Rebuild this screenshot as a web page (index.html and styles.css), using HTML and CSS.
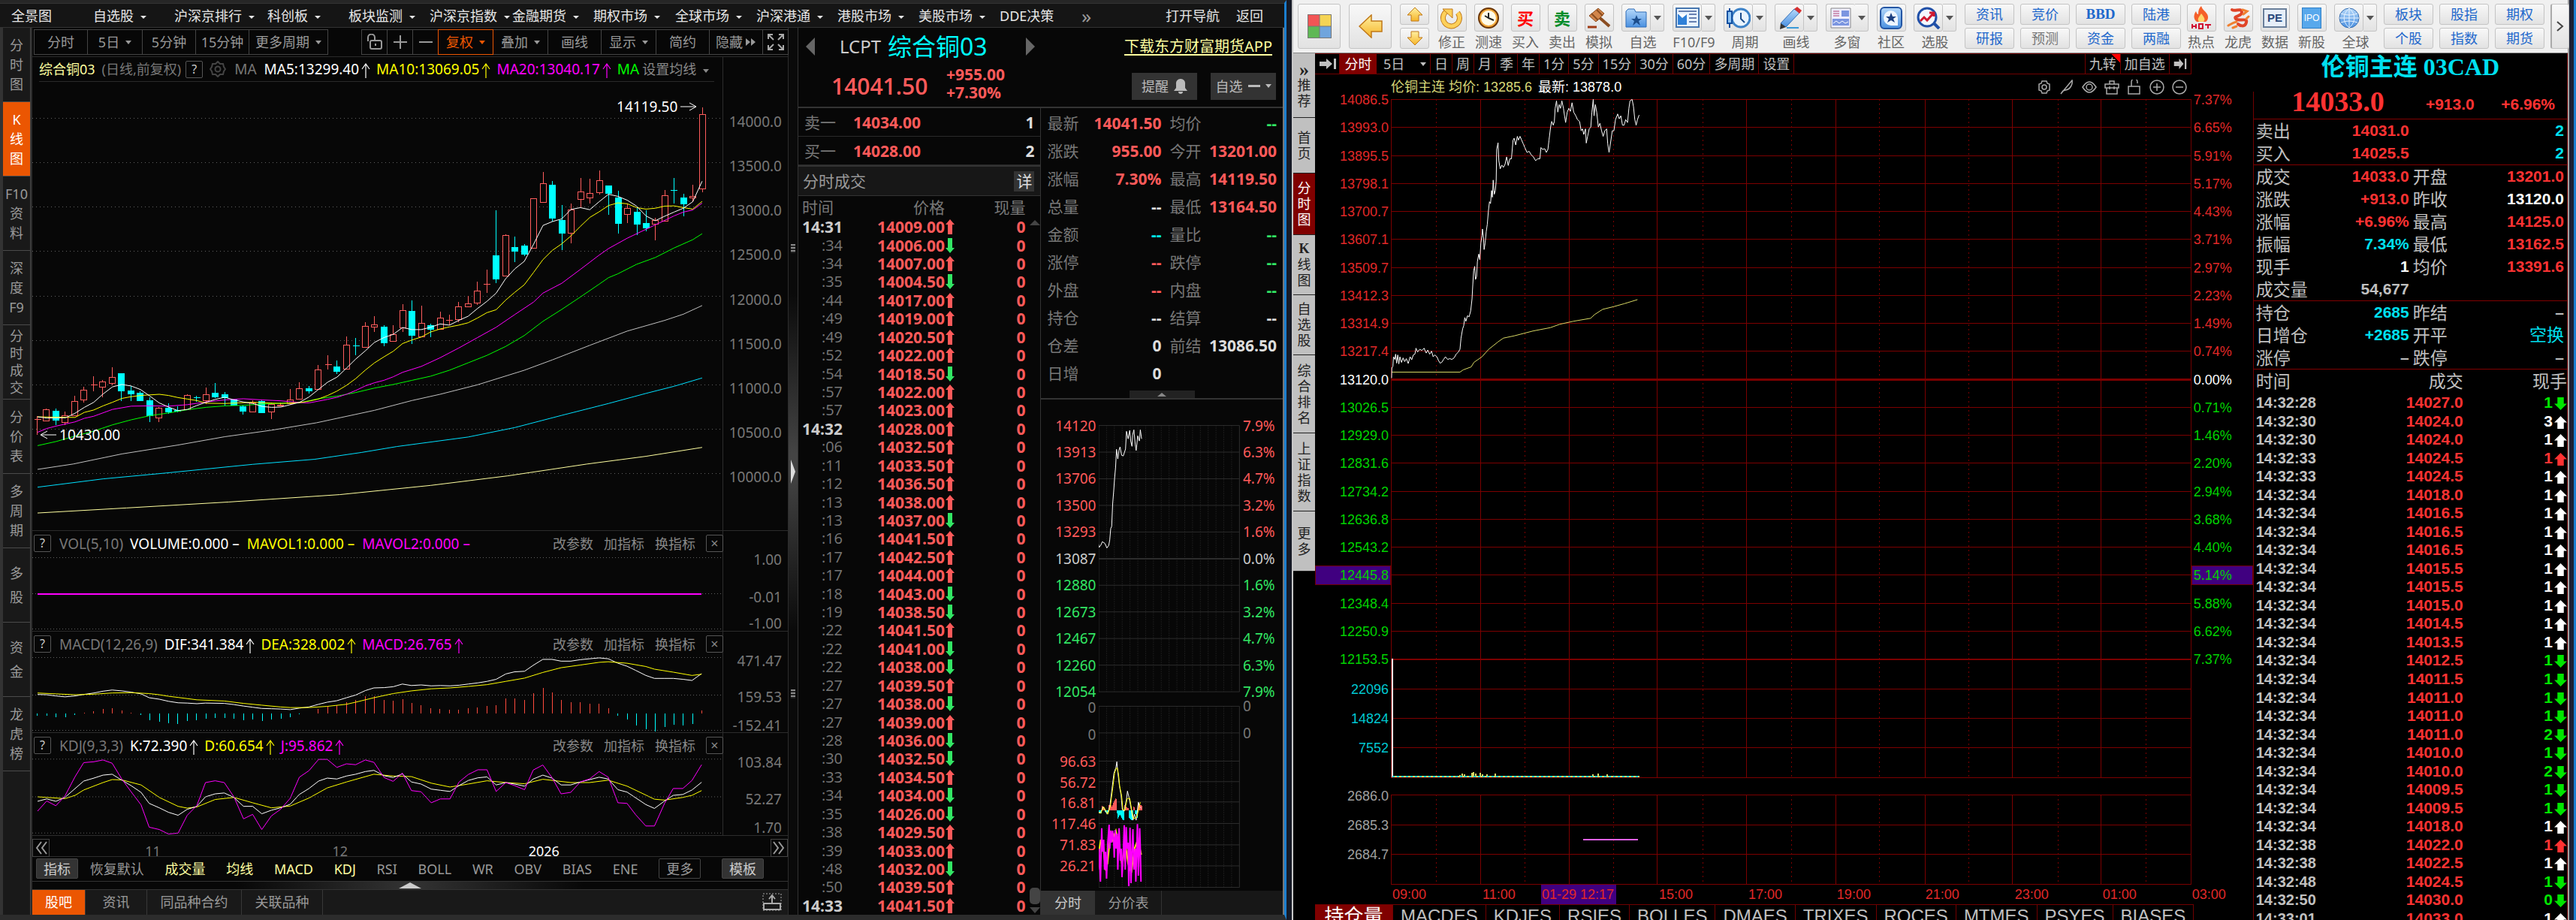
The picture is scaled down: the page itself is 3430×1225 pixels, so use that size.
FILE: index.html
```html
<!DOCTYPE html>
<html lang="zh-CN">
<head>
<meta charset="utf-8">
<title>综合铜03 · 伦铜主连</title>
<link rel="stylesheet" href="styles.css">
</head>
<body>
<svg class="defs" aria-hidden="true">
  <defs>
    <linearGradient id="gold" x1="0" y1="0" x2="0" y2="1"><stop offset="0" stop-color="#fff0a0"/><stop offset="1" stop-color="#f5b429"/></linearGradient>
    <linearGradient id="blue" x1="0" y1="0" x2="0" y2="1"><stop offset="0" stop-color="#b5d8fa"/><stop offset="1" stop-color="#4a90e0"/></linearGradient>
    <symbol id="up" viewBox="0 0 12 20"><path d="M6 0 0 7h3v13h6V7h3z"/></symbol>
    <symbol id="down" viewBox="0 0 12 20"><path d="M6 20 0 13h3V0h6v13h3z"/></symbol>
    <symbol id="fat-up" viewBox="0 0 16 16"><path d="M8 0 0 8h4v8h8V8h4z"/></symbol>
    <symbol id="fat-down" viewBox="0 0 16 16"><path d="M8 16 0 8h4V0h8v8h4z"/></symbol>
    <symbol id="thin-up" viewBox="0 0 12 20"><path d="M6 20V1M1 8l5-7 5 7" fill="none" stroke="currentColor" stroke-width="1.2"/></symbol>
    <symbol id="skip" viewBox="0 0 24 16"><path d="M1 5h9V1l8 7-8 7v-4H1zM20 1h3v14h-3z"/></symbol>
  </defs>
</svg>
<div class="desk">

<main class="em">
  <nav class="em-menu" id="emMenu"></nav>
  <div class="em-body">
    <nav class="em-side" id="emSide"></nav>
    <section class="chart">
      <div class="tools">
        <button class="w71">分时</button><button class="w73">5日<i class="caret"></i></button><button class="w71">5分钟</button><button class="w71">15分钟</button><button class="w106">更多周期<i class="caret"></i></button>
        <span class="grow"></span>
        <button class="w34" aria-label="解锁"><svg width="22" height="22" viewBox="0 0 22 22" fill="none" stroke="#999" stroke-width="2"><rect x="5" y="9" width="15" height="11" rx="2"/><path d="M2 10V5a4 4 0 0 1 9 0v4M12 13v3"/></svg></button><button class="w34" aria-label="放大"><svg width="18" height="18" stroke="#999" stroke-width="2"><path d="M0 9h18M9 0v18"/></svg></button><button class="w34" aria-label="缩小"><svg width="18" height="18" stroke="#999" stroke-width="2"><path d="M0 9h18"/></svg></button><button class="w73 hot">复权<i class="caret"></i></button><button class="w73">叠加<i class="caret"></i></button><button class="w71">画线</button><button class="w73">显示<i class="caret"></i></button><button class="w71">简约</button><button class="w71">隐藏<svg width="14" height="10" fill="#999"><path d="M0 0l6 5-6 5zM7 0l6 5-6 5z"/></svg></button><button class="w34" aria-label="全屏"><svg width="22" height="22" viewBox="0 0 22 22" stroke="#aaa" stroke-width="2" fill="none"><path d="M1 7V1h6M1 1l7 7M15 1h6v6M21 1l-7 7M1 15v6h6M1 21l7-7M15 21h6v-6M21 21l-7-7"/></svg></button>
      </div>
      <div class="panel kline">
        <header class="info">
          <span class="name">综合铜03</span><span class="dim period">(日线,前复权)</span><button class="q">?</button>
          <svg width="22" height="22" viewBox="0 0 22 22" fill="none" stroke="#444" stroke-width="2"><path d="M11 1l3 3 4 0 1 4 2 3-2 3-1 4h-4l-3 3-3-3H4l-1-4-2-3 2-3 1-4h4z"/><circle cx="11" cy="11" r="3.500"/></svg>
          <span class="dim ma">MA</span><span class="w">MA5:13299.40<svg class="ar"><use href="#thin-up"/></svg></span><span class="y">MA10:13069.05<svg class="ar"><use href="#thin-up"/></svg></span><span class="m">MA20:13040.17<svg class="ar"><use href="#thin-up"/></svg></span><span class="lime">MA</span><button class="plain set">设置均线<i class="caret"></i></button>
        </header>
        <svg class="plot" id="kline" viewBox="43 77 920 630" preserveAspectRatio="none"></svg>
        <ul class="axis" id="axK"></ul>
        <span class="mark high">14119.50 <svg width="22" height="12"><path d="M0 6h20M12 1l9 5-9 5" fill="none" stroke="#fff"/></svg></span>
        <span class="mark low"><svg width="22" height="12"><path d="M2 6h20M10 1L1 6l9 5" fill="none" stroke="#fff"/></svg> 10430.00</span>
      </div>
      <div class="panel vol">
        <header class="sub"><button class="q">?</button><span class="dim">VOL(5,10)</span><span class="w">VOLUME:0.000 –</span><span class="y">MAVOL1:0.000 –</span><span class="m">MAVOL2:0.000 –</span></header>
        <svg class="plot" id="vol" viewBox="43 707 920 134" preserveAspectRatio="none"></svg>
        <ul class="axis" id="axV"></ul>
      </div>
      <div class="panel macd">
        <header class="sub"><button class="q">?</button><span class="dim">MACD(12,26,9)</span><span class="w">DIF:341.384<svg class="ar"><use href="#thin-up"/></svg></span><span class="y">DEA:328.002<svg class="ar"><use href="#thin-up"/></svg></span><span class="m">MACD:26.765<svg class="ar"><use href="#thin-up"/></svg></span></header>
        <svg class="plot" id="macd" viewBox="43 841 920 135" preserveAspectRatio="none"></svg>
        <ul class="axis" id="axM"></ul>
      </div>
      <div class="panel kdj">
        <header class="sub"><button class="q">?</button><span class="dim">KDJ(9,3,3)</span><span class="w">K:72.390<svg class="ar"><use href="#thin-up"/></svg></span><span class="y">D:60.654<svg class="ar"><use href="#thin-up"/></svg></span><span class="m">J:95.862<svg class="ar"><use href="#thin-up"/></svg></span></header>
        <svg class="plot" id="kdj" viewBox="43 976 920 137" preserveAspectRatio="none"></svg>
        <ul class="axis" id="axJ"></ul>
      </div>
      <div class="time">
        <button aria-label="向左"><svg width="16" height="18" fill="none" stroke="#999" stroke-width="2"><path d="M8 1L2 9l6 8M15 1L9 9l6 8"/></svg></button>
        <span>11</span><span>12</span><span class="w">2026</span>
        <button aria-label="向右"><svg width="16" height="18" fill="none" stroke="#999" stroke-width="2"><path d="M1 1l6 8-6 8M8 1l6 8-6 8"/></svg></button>
      </div>
      <div class="inds">
        <button class="box fill">指标</button><button class="wide">恢复默认</button><button class="on">成交量</button><button class="on">均线</button><button class="on">MACD</button><button class="on">KDJ</button><button>RSI</button><button>BOLL</button><button>WR</button><button>OBV</button><button>BIAS</button><button>ENE</button><button class="box">更多</button><button class="box fill">模板</button>
      </div>
      <div class="fold"><svg width="30" height="8" fill="#ccc"><path d="M15 0l15 8H0z"/></svg></div>
      <div class="btabs">
        <button class="act">股吧</button><button class="t2">资讯</button><button class="t3">同品种合约</button><button class="t4">关联品种</button><span class="grow"></span>
        <svg width="26" height="24" viewBox="0 0 26 24" fill="none" stroke="#aaa"><path d="M1 1h24v22H1z" stroke-dasharray="2 2"/><path d="M2 14h22v8H2z" stroke-width="2"/><path d="M13 15V4M9 8l4-5 4 5" stroke-width="2"/></svg>
      </div>
    </section>
    <div class="split"><i class="grip"></i><svg width="8" height="32" fill="#ddd"><path d="M1 0q6 16 6 16t-6 16z"/></svg><i class="grip"></i></div>
    <section class="quote">
      <header class="qhead">
        <button class="plain tri-l" aria-label="上一个"><svg width="12" height="24" fill="#666"><path d="M12 0v24L0 12z"/></svg></button>
        <span class="code">LCPT</span><h1>综合铜03</h1>
        <button class="plain tri-r" aria-label="下一个"><svg width="12" height="24" fill="#666"><path d="M0 0v24l12-12z"/></svg></button>
        <a href="#app">下载东方财富期货APP</a>
        <strong class="last">14041.50</strong><p class="chg">+955.00<br>+7.30%</p>
        <div class="acts"><button>提醒<svg width="18" height="20" fill="#bbb"><path d="M9 0a6 6 0 0 1 6 7v5l3 4H0l3-4V7a6 6 0 0 1 6-7zM6 17h6a3 3 0 0 1-6 0z"/></svg></button><button>自选<i class="dash"></i><i class="caret"></i></button></div>
      </header>
      <div class="qleft">
        <dl class="bid"><dt>卖一</dt><dd>14034.00</dd><dd class="n">1</dd></dl>
        <dl class="bid"><dt>买一</dt><dd>14028.00</dd><dd class="n">2</dd></dl>
        <div class="tickhead">分时成交<button>详</button></div>
        <div class="tickwrap">
          <table class="ticks"><thead><tr><th>时间</th><th>价格</th><th>现量</th></tr></thead><tbody id="ticks"></tbody></table>
          <div class="sb"><svg width="14" height="7"><path d="M7 0l7 7H0z"/></svg><i></i><svg width="14" height="8"><path d="M0 0h14l-7 8z"/></svg></div>
        </div>
      </div>
      <div class="qright">
        <dl class="stats" id="stats"></dl>
        <div class="pull"><button aria-label="收起"><svg width="12" height="5" fill="#888"><path d="M6 0l6 5H0z"/></svg></button></div>
        <div class="mini"><ul class="axis" id="axL"></ul><svg id="mini" viewBox="1464 533 187 653" preserveAspectRatio="none"></svg><ul class="axis" id="axR"></ul></div>
        <div class="mtabs"><button class="act">分时</button><button>分价表</button></div>
      </div>
    </section>
  </div>
</main>

<main class="cl">
  <div class="bar">
    <button class="big" aria-label="主页"><svg width="32" height="32"><path fill="#f25555" d="M0 0h16v16H0z"/><path fill="#f5d455" d="M16 0h16v16H16z"/><path fill="#5fb855" d="M0 16h16v16H0z"/><path fill="#70a5dd" d="M16 16h16v16H16z"/><path fill="none" stroke="#777" d="M.5.5h31v31H.5zM16 0v32M0 16h32"/></svg></button>
    <button class="big" aria-label="后退"><svg width="32" height="32" fill="url(#gold)" stroke="#c07818" stroke-width="1.500"><path d="M1 16L17 1v8h14v14H17v8z"/></svg></button>
    <div class="ud"><button aria-label="上翻"><svg width="22" height="20" fill="url(#gold)" stroke="#c07818"><path d="M11 1l10 10h-5v8H6v-8H1z"/></svg></button><button aria-label="下翻"><svg width="22" height="20" fill="url(#gold)" stroke="#c07818"><path d="M11 19L1 9h5V1h10v8h5z"/></svg></button></div>
    <button class="ic"><b><svg width="32" height="30"><path d="M9 6a11 11 0 1 0 15 2" fill="none" stroke="#c07818" stroke-width="7"/><path d="M9 6a11 11 0 1 0 15 2" fill="none" stroke="#fcd05a" stroke-width="5"/><path d="M4 3h13v12z" fill="#fcd05a" stroke="#c07818"/></svg></b>修正</button>
    <button class="ic"><b><svg width="30" height="30"><circle cx="15" cy="15" r="13" fill="#f2a93b" stroke="#6b3505" stroke-width="2"/><circle cx="15" cy="15" r="10" fill="#fffbe8"/><path d="M15 8v7l7 3M10 12l5 3" fill="none" stroke="#222" stroke-width="2"/></svg></b>测速</button>
    <button class="ic"><b class="buy">买</b>买入</button>
    <button class="ic"><b class="sell">卖</b>卖出</button>
    <button class="ic"><b><svg width="32" height="30"><path d="M14 12l16 14" stroke="#8a4c20" stroke-width="4"/><path d="M3 12L15 2l8 7-11 11z" fill="#d2854a" stroke="#8a4c20"/><path d="M6 9l9 9M13 4l8 8" stroke="#8a4c20" stroke-width="2"/><path d="M1 27h12" stroke="#a03a14" stroke-width="3"/></svg></b>模拟</button>
    <button class="ic dd"><b><svg width="30" height="28"><path d="M1 26V5l3-3h8l2 4h14v20z" fill="url(#blue)" stroke="#2f6db8"/><path d="M15 10l2 5h5l-4 3 2 6-5-4-5 4 2-6-4-3h5z" fill="#1c4d8c"/></svg></b><em></em>自选</button>
    <button class="ic dd"><b><svg width="32" height="28"><path d="M1 1h30v25H1z" fill="#e8f2ff" stroke="#4877b0" stroke-width="2"/><path d="M3 9h12v14H3z" fill="#2f80d8"/><path d="M4 9l5 5 6-5" fill="#fff"/><path d="M4 5h24M18 9h10M18 14h10M18 19h10" stroke="#667fb0" stroke-width="2"/></svg></b><em></em>F10/F9</button>
    <button class="ic dd"><b><svg width="32" height="30"><circle cx="19" cy="15" r="12" fill="#e9f4ff" stroke="#3c82c8" stroke-width="3"/><path d="M19 8v8l5 5" fill="none" stroke="#1c4d8c" stroke-width="2"/><path d="M4 2v26" stroke="#1450a0" stroke-width="2"/><path d="M1 6h6v16H1z" fill="#8fc4f5" stroke="#1450a0" stroke-width="2"/></svg></b><em></em>周期</button>
    <button class="ic dd"><b><svg width="32" height="30"><path d="M4 22L22 3l7 5-18 19z" fill="url(#blue)" stroke="#2f6db8"/><path d="M22 3l4-3 6 5-3 4z" fill="#d63030"/><path d="M4 22l7 5-8 3z" fill="#333"/><path d="M12 28h16" stroke="#3a9ad8" stroke-width="2"/></svg></b><em></em>画线</button>
    <button class="ic dd one"><b><svg width="28" height="28"><path d="M1 1h26v26H1z" fill="#eef" stroke="#888"/><path d="M15 4h10v8H15zM3 15h22v9H3z" fill="#7b95e0"/><path d="M4 5h8M4 8h8M4 11h8" stroke="#b04070"/><path d="M4 21l4-3 4 3 4-3 4 3 4-2" fill="none" stroke="#fff"/></svg></b><em></em>多窗</button>
    <button class="ic"><b><svg width="30" height="30"><rect x="1" y="1" width="28" height="28" rx="5" fill="url(#blue)" stroke="#2456a4" stroke-width="2"/><path d="M15 5a10 10 0 1 0 0 20h9V15a10 10 0 0 0-9-10z" fill="#eef6ff"/><path d="M15 8l2 5h5l-4 3 2 5-5-3-5 3 2-5-4-3h5z" fill="#1c3f80"/></svg></b>社区</button>
    <button class="ic dd"><b><svg width="32" height="30"><path d="M23 22l7 7" stroke="#2050a8" stroke-width="4"/><circle cx="14" cy="14" r="12" fill="#f4f8ff" stroke="#2050a8" stroke-width="3"/><path d="M5 19l5-5 4 4 8-9M17 8h6v5" fill="none" stroke="#d01830" stroke-width="3"/></svg></b><em></em>选股</button>
    <div class="txt c4"><button>资讯</button><button>竞价</button><button class="serif">BBD</button><button>陆港</button><button>研报</button><button class="off">预测</button><button>资金</button><button>两融</button></div>
    <button class="ic"><b><svg width="30" height="32"><path d="M15 0c2 6 6 7 8 11s1 8-2 10H9C4 17 5 11 8 7c1 3 2 4 3 4 0-5 1-8 4-11z" fill="#f5602a"/><path d="M15 10c4 5 6 8 3 11h-6c-3-4 0-6 3-11z" fill="#ffd66b"/><path d="M3 24v6M8 24v6M3 27h5M12 24h5v6h-5zM20 25h8M24 24v6" fill="none" stroke="#d01030" stroke-width="2"/></svg></b>热点</button>
    <button class="ic"><b><svg width="32" height="30" fill="none" stroke-linecap="round"><path d="M8 4c4 3 12-3 13 3s-12 5-8 9 16-2 14 5-9 4-11 2" stroke="#e04428" stroke-width="4"/><path d="M14 20c-5 1-9 4-11 5M22 4l6 2-5 4M27 16l3-3M9 28l5-2" stroke="#f08030" stroke-width="3"/></svg></b>龙虎</button>
    <button class="ic"><b class="pe"><i>PE</i></b>数据</button>
    <button class="ic"><b class="ipo"><i>IPO</i></b>新股</button>
    <button class="ic dd"><b><svg width="30" height="30"><circle cx="15" cy="15" r="13" fill="url(#blue)" stroke="#3a6fb0"/><path d="M15 2v26M2 15h26M15 2c-9 8-9 18 0 26M15 2c9 8 9 18 0 26M4 9q11 4 22 0M4 21q11-4 22 0" fill="none" stroke="#e8f3ff"/></svg></b><em></em>全球</button>
    <div class="txt c3"><button>板块</button><button>股指</button><button>期权</button><button>个股</button><button>指数</button><button>期货</button></div>
    <button class="next" aria-label="更多"><svg width="12" height="16" fill="none" stroke="#444" stroke-width="2"><path d="M2 2l7 6-7 6"/></svg></button>
  </div>
  <div class="cl-body">
    <nav class="cl-side">
      <button class="r86"><b>»</b>推荐</button><button class="r74">首页</button><button class="r82 act">分时图</button><button class="r80"><b>K</b>线图</button><button class="r80">自选股</button><button class="r104">综合排名</button><button class="r104">上证指数</button><button class="r80">更多</button>
    </nav>
    <section class="intra">
      <div class="per">
        <button class="first" aria-label="收起左栏"><svg width="24" height="16"><use href="#skip"/></svg></button><button class="act">分时</button><button class="d5">5日<i class="caret"></i></button><button>日</button><button>周</button><button>月</button><button>季</button><button>年</button><button>1分</button><button>5分</button><button>15分</button><button>30分</button><button>60分</button><button>多周期</button><button class="end">设置</button>
        <span class="grow"></span><button class="nine">九转</button><button>加自选</button><button aria-label="收起右栏"><svg width="18" height="16" viewBox="0 0 24 16" preserveAspectRatio="none"><use href="#skip"/></svg></button>
      </div>
      <div class="cinfo"><span class="ye">伦铜主连 均价: 13285.6</span><span class="w">最新: 13878.0</span><span class="grow"></span>
        <svg viewBox="0 0 20 20"><path d="M7 2h6l1 3 3 1v8l-3 1-1 3H7l-1-3-3-1V6l3-1z"/><circle cx="10" cy="10" r="3"/></svg>
        <svg viewBox="0 0 20 20"><path d="M2 19L17 1c1 5-2 12-9 13l-3 1z"/></svg>
        <svg viewBox="0 0 20 20"><path d="M1 10q9-14 18 0-9 14-18 0z"/><circle cx="10" cy="10" r="4"/></svg>
        <svg viewBox="0 0 20 20"><path d="M1 6h18v5H1zM3 11v8h14v-8M7 6V2h6v4M7 9v4M13 9v4"/></svg>
        <svg viewBox="0 0 20 20"><path d="M2 9h15v10H2zM6 9V3a4 4 0 0 1 8 0v2"/></svg>
        <svg viewBox="0 0 20 20"><circle cx="10" cy="10" r="9"/><path d="M5 10h10M10 5v10"/></svg>
        <svg viewBox="0 0 20 20"><circle cx="10" cy="10" r="9"/><path d="M5 10h10"/></svg>
      </div>
      <ul class="axis" id="axCL"></ul><svg class="cplot" id="intra" viewBox="1853 132 1065 1046" preserveAspectRatio="none"></svg><ul class="axis" id="axCR"></ul>
      <ol class="hours"><li>09:00</li><li>11:00</li><li class="cur">01-29 12:17</li><li>15:00</li><li>17:00</li><li>19:00</li><li>21:00</li><li>23:00</li><li>01:00</li><li>03:00</li></ol>
      <div class="itabs"><button class="act">持仓量</button><button>MACDES</button><button>KDJES</button><button>RSIES</button><button>BOLLES</button><button>DMAES</button><button>TRIXES</button><button>ROCES</button><button>MTMES</button><button>PSYES</button><button>BIASES</button></div>
    </section>
    <section class="cq">
      <h2>伦铜主连 <span>03CAD</span></h2>
      <div class="cprice"><strong>14033.0</strong><b>+913.0</b><b>+6.96%</b></div>
      <div id="cstats"></div>
      <table class="cticks"><thead><tr><th>时间</th><th>成交</th><th>现手</th></tr></thead><tbody id="cticks"></tbody></table>
    </section>
  </div>
</main>
<div class="edge"></div>
</div>
<script src="app.js"></script>
</body>
</html>
```
FILE: styles.css
```css
*{box-sizing:border-box}
body{margin:0;background:#161a26;color:#999;font:18px/24px "Noto Sans","Noto Sans CJK SC",sans-serif}
button{margin:0;padding:0;border:0;background:none;color:inherit;font:inherit;white-space:nowrap;cursor:pointer}
ul,ol,dl,dd,p,h1,h2{margin:0;padding:0;list-style:none}
svg{flex:none;display:block}
.defs{position:absolute;width:0;height:0}
.grow{flex:1}
.caret{display:inline-block;border:4px solid transparent;border-top:5px solid currentColor;border-bottom:0;margin-left:9px;vertical-align:middle}
.w{color:#fff}.y{color:#ff0}.m{color:#f0f}.lime{color:#0f0}.dim{color:#777}
.desk{display:grid;grid-template:minmax(0,1fr)/minmax(0,1713fr) 7px minmax(0,1701fr) 9px;height:100vh;min-height:900px;overflow:hidden}
.cl{grid-column:3}
.edge{border-right:3px solid #1b7fd0;background:#1a2033}

/* 左侧行情窗口 */
.em{display:grid;grid-template-rows:33px minmax(0,1fr);min-width:0;border-top:4px solid #262626;border-bottom:7px solid #2c2c2c;background:#070707;border-right:3px solid #1b7fd0}
.em-menu{display:flex;align-items:center;padding-left:15px;background:#151515;border-top:1px solid #333;border-bottom:1px solid #333;color:#e6e6e6}
.em-menu button{flex:0 0 108px;text-align:left}
.em-menu .s{flex-basis:109px}.em-menu .l{flex-basis:124px}.em-menu .x{flex-basis:110px}
.em-menu .caret{border-top-width:4px}
.em-menu .more{color:#999;flex-basis:30px;font-size:26px}
.em-menu .nav{flex:0 0 94px}.em-menu .back{flex:0 0 64px}
.em-body{display:grid;grid-template:minmax(0,1fr)/41px minmax(0,1009fr) 12px minmax(0,646fr);min-height:0;border-right:2px solid #777}
.em-side{border-left:4px solid #333;background:#191919;display:flex;flex-direction:column;border-right:1px solid #444}
.em-side button{flex:0 0 99px;border-bottom:1px solid #4a4a4a;display:flex;flex-direction:column;justify-content:center;align-items:center;line-height:26px}
.em-side .n4{line-height:23px}.em-side .n2{line-height:32px}
.em-side .act{background:#eb5602;color:#fff}
.chart{display:grid;grid-template-rows:39px minmax(0,630fr) minmax(0,134fr) minmax(0,135fr) minmax(0,137fr) 28px 33px 10px 34px;border-left:2px solid #2c2c2c;min-width:0;border-right:1px solid #2c2c2c}
.tools{display:flex;padding:2px 0 2px 2px;border-bottom:1px solid #2a2a2a}
.tools button{border:1px solid #444;display:flex;align-items:center;justify-content:center;gap:4px;height:34px;margin-right:-1px}
.tools .caret{margin-left:4px}
.w71{width:72px}.w73{width:74px}.w106{width:106px}.w34{width:35px}
.tools .hot{border-color:#eb5602;color:#eb5602;z-index:1}
.panel{display:grid;grid-template:minmax(0,1fr)/minmax(0,920fr) 86px;border-bottom:1px solid #2c2c2c;min-height:0;position:relative}
.panel>*{grid-row:1}
.panel .plot{grid-column:1;width:100%;height:100%;border-right:1px solid #2c2c2c;min-height:0}
.panel .axis{grid-column:2;padding-right:8px}
.axis{display:grid;text-align:right;line-height:20px;font-size:19px;color:#777;min-height:0}
.axis::before{content:""}
.axis li{white-space:nowrap}
.info,.sub{grid-column:1;align-self:start;display:flex;align-items:center;height:33px;font-size:19px;white-space:nowrap;position:relative;z-index:1}
.info{margin:0 12px 0 9px;border-bottom:1px solid #2a2a2a}
.name{color:#ffffa0;font-size:18px}.period{font-size:18px;margin-left:9px}
.q{border:1px solid #555;border-radius:2px;width:23px;height:23px;line-height:21px;color:#ccc;font-size:16px;margin:0 9px 0 6px}
.ma{margin:0 10px 0 11px}
.info .ar,.sub .ar{display:inline-block;width:12px;height:20px;vertical-align:middle;margin:0 8px 0 3px}
.set{font-size:18px;color:#888;margin-left:4px}
.sub{height:34px;padding-left:2px;font-size:19px}
.sub .q{margin:0 11px 0 0}.sub .dim{margin-right:9px;font-size:19px}
.vol .sub span.w,.vol .sub span.y{margin-right:10px}
.sub .ops{margin-left:auto;display:flex;gap:14px;align-items:center;color:#888;font-size:18px}
.sub .ops .q{margin:0;color:#888;font-size:18px}
.mark{position:absolute;color:#fff;font-size:19px;display:flex;align-items:center;gap:4px}
.mark.high{right:12%;top:8.5%}.mark.low{left:1%;top:78%}
.time{display:grid;grid-template-columns:150fr 249fr 261fr 322fr 23px;align-items:center;border-bottom:1px solid #2c2c2c;font-size:18px;color:#777}
.time>*{grid-row:1}
.time span{padding-top:8px}
.time button{width:23px;height:24px;border:1px solid #444;display:grid;place-items:center}
.time button:first-child{grid-column:1}.time span:nth-of-type(1){grid-column:2}.time span:nth-of-type(2){grid-column:3}.time span:nth-of-type(3){grid-column:4}
.inds{display:flex;align-items:center;justify-content:space-between;padding:0 32px 0 5px;border-bottom:1px solid #333}
.inds .on{color:#ffffa0}
.inds .wide{margin-left:-12px}
.inds .box{width:56px;height:27px;border:1px solid #444;border-radius:2px}
.inds .fill{background:#333;color:#ccc}
.fold{display:grid;place-items:center;background:linear-gradient(90deg,#070707 27%,#333 50%,#070707 73%)}
.btabs{display:flex;align-items:center;background:#191919;border-top:1px solid #333;padding-right:8px}
.btabs button{height:100%;width:82px;border-right:1px solid #383838}
.btabs .act{width:71px;background:#eb5602;color:#fff}.btabs .t3{width:126px}.btabs .t4{width:108px}
.split{display:flex;flex-direction:column;align-items:center;justify-content:space-between;padding:288px 0;background:linear-gradient(#0a0a0a 30%,#444 48%,#444 50%,#0a0a0a 68%)}
.grip{width:6px;height:12px;background:repeating-linear-gradient(#888 0 2px,#222 2px 4px)}

.quote{display:grid;grid-template:107px minmax(0,1fr)/minmax(0,324fr) minmax(0,322fr);border-left:1px solid #333;min-width:0;min-height:0}
.qhead{grid-column:1/3;display:grid;grid-template-columns:55px 64px 184px 130px minmax(0,1fr);grid-template-rows:50px 1fr;align-items:center;border-bottom:2px solid #333;padding-right:9px}
.tri-l{justify-self:start;margin-left:10px}
.tri-r{justify-self:start}
.code{color:#ccc;font-size:24px}
h1{color:#0ff;font:400 32px/40px "Noto Sans","Noto Sans CJK SC",sans-serif}
.qhead a{justify-self:end;color:#ffffa0;font-size:20px;text-underline-offset:3px;margin-right:5px}
.last{grid-column:1/4;justify-self:start;margin-left:44px;color:#ff5a5a;font:600 30px/36px "Open Sans",sans-serif;width:152px;grid-row:2}
.chg{grid-row:2;grid-column:3/5;margin-left:78px;color:#ff5a5a;font:700 21px/24px "Open Sans",sans-serif;margin-top:-8px}
.acts{grid-row:2;grid-column:5;display:flex;gap:18px;justify-content:flex-end}
.acts button{background:#333;color:#bbb;width:87px;height:36px;display:flex;align-items:center;justify-content:center;gap:7px;flex:none}
.acts .caret{margin:0}.dash{width:16px;height:3px;background:#bbb}
.qleft{display:grid;grid-template-rows:38px 38px 41px minmax(0,1fr);border-right:1px solid #333;min-height:0}
.bid{display:grid;grid-template-columns:65px 1fr 60px;align-items:center;padding:0 8px;border-bottom:1px solid #2a2a2a;font-size:21px}
.bid dt{color:#777}
.bid dd{color:#ff5a5a;font-family:"Open Sans",sans-serif;font-weight:700}
.bid .n{color:#ddd;text-align:right}
.tickhead{display:flex;justify-content:space-between;align-items:center;background:#171717;border:solid #333;border-width:2px 0 1px;padding:0 8px 0 6px;font-size:21px}
.tickhead button{background:#333;color:#ddd;width:27px;height:27px}
.tickwrap{display:grid;grid-template:minmax(0,1fr)/minmax(0,1fr) 14px;min-height:0}
.ticks{display:flex;flex-direction:column;font-size:21px;line-height:24px;min-height:0}
.ticks tbody{display:grid;grid-auto-rows:minmax(0,1fr);flex:1;min-height:0}
.ticks thead{height:29px}
.ticks tr{display:grid;grid-template-columns:59px 153px 1fr;padding-right:6px;align-items:center}
.ticks td,.ticks th{padding:0;text-align:right;font-weight:400;color:#777;white-space:nowrap}
.ticks th{line-height:30px}
.ticks th:first-child{text-align:left;padding-left:5px}
.ticks th:nth-child(2){padding-right:17px}
.ticks td{font-family:"Open Sans",sans-serif}
.ticks td:first-child{font-size:20px}
.ticks .hr td:first-child{font-weight:700;color:#ccc;font-size:21px}
.ticks td:nth-child(n+2){color:#ff5a5a;font-weight:700}
.ticks td svg{display:inline-block;width:12px;height:20px;vertical-align:-2px;margin:0 4px 0 1px;fill:#ff5a5a}
.ticks td .g{fill:#32e664}
.sb{display:flex;flex-direction:column;align-items:center;justify-content:space-between;padding:32px 0 2px;fill:#444}
.sb i{width:14px;height:22px;border-radius:5px;background:#444;margin:auto 0 4px}
.qright{display:grid;grid-template-rows:376px 12px minmax(0,1fr) 32px;min-height:0}
.stats{display:grid;grid-template-columns:152px minmax(0,1fr);grid-auto-rows:37px;padding:1px 8px 0;column-gap:11px;align-items:center;font-size:21px}
.stats div{display:flex;justify-content:space-between;white-space:nowrap}
.stats dt{color:#777}
.stats dd{font-family:"Open Sans",sans-serif;font-weight:700;color:#ddd}
.stats .r{color:#ff5a5a}.stats .g{color:#32e664}.stats .c{color:#0ff}
.pull{display:grid;place-items:center;border-bottom:2px solid #333}
.pull button{width:87px;height:10px;background:#222;display:grid;place-items:center}
.mini{display:grid;grid-template:minmax(0,1fr)/73px minmax(0,187fr) 53px;column-gap:4px;min-height:0}
.mini svg{width:100%;height:100%;min-height:0}
.mini .axis{font-size:19px}
#axR{text-align:left}
.axis .r{color:#ff5a5a}.axis .g{color:#32e664}.axis .w{color:#ccc}
.mtabs{display:flex;background:#171717}
.mtabs button{width:89px;border-right:1px solid #333}
.mtabs .act{width:72px;background:#333;color:#ccc}

/* 右侧行情窗口 */
.cl{display:grid;grid-template-rows:71px minmax(0,1fr);background:#000;color:#c0c0c0;border-left:2px solid #c8c8c8;border-right:2px solid #a0a0a0;min-width:0}
.bar{background:#f0f0f0;border-bottom:1px solid #888;display:flex;gap:11px;padding:5px 0 5px 6px;color:#666;min-width:0}
.big,.ud button,.ic b,.txt button,.next{background:linear-gradient(#f8f8f8,#e2e2e2);border:1px solid #c4c4c4;border-radius:3px}
.big{width:57px;height:60px;display:grid;place-items:center;flex:none}
.ud{display:grid;grid-template-rows:28px 28px;gap:4px;flex:none}
.ud button{width:39px;display:grid;place-items:center}
.ic{display:grid;grid-template:37px 25px/39px;flex:none;width:38px;align-content:start;font-size:18px;text-align:center;line-height:28px;justify-content:center;justify-items:center;white-space:nowrap}
.ic b{width:39px;height:37px;display:grid;place-items:center;font-size:22px}
.ic.dd{grid-template:37px 25px/39px 18px;width:57px}
.ic.dd em{border:1px solid #c4c4c4;border-left:0;border-radius:0 3px 3px 0;width:18px;height:37px;background:linear-gradient(#f8f8f8,#e2e2e2);display:grid;place-items:center}
.ic.dd em::after{content:"";border:5px solid transparent;border-top:6px solid #555;border-bottom:0}
.one b{border-right:0}
.lab{grid-column:1/-1;line-height:28px}
.ic .buy{color:#f00}.ic .sell{color:#008c28}
.pe i{background:#e6eef8;border:2px solid #6a7f9a;font:700 15px/22px "Liberation Sans",sans-serif;color:#2a4a7c;width:32px}
.ipo i{background:#58a8ec;border:1px solid #2f80c8;font:400 12px/26px "Liberation Sans",sans-serif;color:#fff;width:26px}
.txt{display:grid;grid-template-columns:repeat(4,66px);grid-template-rows:28px 28px;gap:4px 8px;color:#1e68cc;flex:none;align-self:start;margin-right:-3px}
.txt.c3{grid-template-columns:repeat(3,66px);margin-left:-2px}
.serif{font:700 19px/24px "Liberation Serif",serif}
.off{color:#777}
.next{width:25px;height:60px;display:grid;place-items:center;border-left:2px solid #aaa;flex:none}
.cl-body{display:grid;grid-template:minmax(0,1fr)/29px minmax(0,1249fr) minmax(0,418fr);min-height:0}
.cl-side{display:flex;flex-direction:column}
.cl-side button{background:#c0c0c0;color:#222;border-bottom:1px solid #222;width:29px;flex:none;white-space:normal;padding:0 5px;line-height:21px;word-break:break-all}
.cl-side b{display:block;font-family:"Liberation Serif",serif;line-height:21px}
.cl-side .act{background:#800000;color:#fff}
.cl-side .r86 b{font-size:26px}
.r86{height:86px}.r74{height:74px}.r82{height:82px}.r80{height:80px}.r104{height:104px}
.intra{display:grid;grid-template:28px 33px minmax(0,1fr) 26px 21px/101px minmax(0,1065fr) 83px;min-width:0;min-height:0}
.per{grid-column:1/3;display:flex;border:solid #700000;border-width:1px 1px 1px 0}
.per button{padding:0 5px;border-left:1px solid #700000;display:flex;align-items:center;font-size:18px}
.per svg{fill:#c0c0c0}
.per .first{border:0;padding:0 3px 0 5px}
.per .act{background:#800000;color:#fff;width:50px;justify-content:center}
.per .d5{border:0;width:71px;padding-left:9px;justify-content:space-between;color:#c0c0c0}
.per .end{border-right:1px solid #700000}
.per .nine{background:linear-gradient(225deg,#f00 8px,transparent 8px)}
.cinfo{grid-column:1/3;grid-row:2;display:flex;align-items:center;gap:8px;padding:0 6px 0 101px;font-family:"Liberation Sans","Noto Sans CJK SC",sans-serif}
.cinfo .ye{color:#d8d878}
.cinfo svg{width:20px;height:20px;fill:none;stroke:#aaa;stroke-width:1.5;margin-left:2px}
.intra .axis{font:18px/20px "Liberation Sans",sans-serif;grid-row:3;margin-top:-10px;z-index:1}
#axCL li{padding-right:3px}#axCR{grid-column:3;text-align:left}#axCR li{padding-left:3px}
.cl .axis .r{color:#e12828}.cl .axis .g{color:#00d200}.cl .axis .w{color:#fff}.axis .cy{color:#00c8d2}.axis .gy{color:#a0a0a0}
.axis .hl span{display:block;background:#400080;border:1px solid #700000;margin:-3px -3px -3px 0;padding:2px 2px}
#axCR .hl span{margin:-3px 0 -3px -3px}
.cplot{grid-column:2;grid-row:3;width:100%;height:100%;min-height:0}
#axCR,.cplot{border-right:1px solid #700000}
.hours{grid-column:1/4;display:grid;grid-template-columns:120fr 78fr 157fr 119fr 118fr 118fr 119fr 117fr 119fr 81fr;margin-left:101px;padding-left:2px;font:18px/26px "Liberation Sans",sans-serif;color:#e12828;white-space:nowrap;border-right:1px solid #700000}
.cur{background:#400080;justify-self:start;width:100px;padding-left:1px}
.itabs{grid-column:1/4;display:flex;border-right:1px solid #700000;overflow:hidden;font:24px/28px "Liberation Sans","Noto Sans CJK SC",sans-serif}
.itabs button{flex:none;height:30px;padding:0 10px;border:solid #700000;border-width:1px 1px 0 0}
.itabs .act{background:#800000;color:#fff;width:104px;font-size:26px}
.cq{display:flex;flex-direction:column;min-width:0;min-height:0;border-right:1px solid #700000}
h2{height:40px;text-align:center;color:#00e0f0;font:700 32px/36px "Liberation Serif","Noto Sans CJK SC",serif;white-space:nowrap}
.cprice{display:grid;grid-template-columns:174px 120px 1fr;justify-items:end;align-items:center;height:48px;padding-right:16px;color:#ff3232;border-bottom:1px solid #800000;white-space:nowrap}
.cprice strong{font:700 38px/40px "Liberation Serif",serif}
.cprice b{font:700 21px/30px "Liberation Sans",sans-serif;padding-top:8px}
.cgrp{display:grid;grid-template-columns:204px minmax(0,1fr);column-gap:5px;grid-auto-rows:30px;padding:0 4px 0 3px;border-bottom:1px solid #800000;align-items:center}
.cgrp div{display:flex;justify-content:space-between;align-items:center;white-space:nowrap}
.cgrp dt{font-size:23px}
.cgrp dd{font:700 21px/30px "Liberation Sans","Noto Sans CJK SC",sans-serif}
.cgrp .t{font-weight:400;font-size:23px}
.cgrp .r{color:#ff3232}.cgrp .c{color:#00e0f0}.cgrp .w{color:#fff}
.cticks{display:flex;flex-direction:column;flex:1;min-height:0;font:700 21px/24px "Liberation Sans","Noto Sans CJK SC",sans-serif;margin-bottom:-10px}
.cticks thead{height:32px}
.cticks tbody{display:grid;grid-auto-rows:minmax(0,1fr);flex:1;min-height:0}
.cticks tr{display:grid;grid-template-columns:100px 179px 1fr;align-items:center}
.cticks td,.cticks th{padding:0;text-align:right;white-space:nowrap}
.cticks th{font-weight:400;font-size:23px;line-height:32px}
.cticks td:first-child{text-align:left;padding-left:3px;font-size:20px}
.cticks th:first-child{text-align:left;padding-left:3px}
.cticks td:nth-child(2){color:#ff3232}
.cticks svg{display:inline-block;width:17px;height:17px;vertical-align:-3px;margin-left:2px;fill:currentColor}
.cticks .uw{color:#fff}.cticks .ur{color:#ff3232}.cticks .dg{color:#00e600}
```
FILE: app.js
```js
const $ = id => document.getElementById(id);
const NS = 'http://www.w3.org/2000/svg';
function add(svg, tag, attrs) {
  const el = document.createElementNS(NS, tag);
  el.setAttribute('vector-effect', 'non-scaling-stroke');
  for (const k in attrs) el.setAttribute(k, attrs[k]);
  svg.appendChild(el);
  return el;
}
const line = (svg, x1, y1, x2, y2, stroke, dash, w = 1) =>
  add(svg, 'line', { x1, y1, x2, y2, stroke, 'stroke-width': w, 'stroke-dasharray': dash || 'none', 'shape-rendering': 'crispEdges' });
const poly = (svg, points, stroke, w = 1) => add(svg, 'polyline', { points, stroke, fill: 'none', 'stroke-width': w });
const rect = (svg, x, y, width, height, fill, stroke = 'none') =>
  add(svg, 'rect', { x, y, width, height, fill, stroke, 'shape-rendering': 'crispEdges' });
const group = (svg, transform) => add(svg, 'g', { transform });

/* axis labels: [text, top, class] inside a column that runs from start to end */
function axis(id, start, end, items) {
  const tops = items.map(i => i[1]).concat(end);
  const rows = [items[0][1] - start].concat(items.map((_, i) => tops[i + 1] - tops[i]));
  $(id).style.gridTemplateRows = rows.map(r => `minmax(0,${r}fr)`).join(' ');
  $(id).innerHTML = items.map(i => `<li class="${i[2] || ''}"><span>${i[0]}</span></li>`).join('');
}

/* menus */
$('emMenu').innerHTML = [['全景图', 's', 0], ['自选股', '', 1], ['沪深京排行', 'l', 1], ['科创板', '', 1], ['板块监测', '', 1], ['沪深京指数', 'x', 1], ['金融期货', '', 1], ['期权市场', 's', 1], ['全球市场', '', 1], ['沪深港通', '', 1], ['港股市场', '', 1], ['美股市场', '', 1], ['DDE决策', 's', 0], ['»', 'more', 0]]
  .map(m => `<button class="${m[1]}">${m[0]}${m[2] ? '<i class="caret"></i>' : ''}</button>`).join('') +
  '<span class="grow"></span><button class="nav">打开导航</button><button class="back">返回</button>';
$('emSide').innerHTML = ['分 时 图', 'K 线 图', 'F10 资 料', '深 度 F9', '分 时 成 交', '分 价 表', '多 周 期', '多 股', '资 金', '龙 虎 榜']
  .map((t, i) => { const p = t.split(' '); return `<button class="n${p.length}${i === 1 ? ' act' : ''}">${p.map(c => `<span>${c}</span>`).join('')}</button>`; }).join('');
document.querySelectorAll('.sub').forEach(h => h.insertAdjacentHTML('beforeend',
  '<div class="ops"><button>改参数</button><button>加指标</button><button>换指标</button><button class="q">×</button></div>'));

/* daily candles: up flag, high, body top, body bottom, low */
const K = '1,1405,1417,1418,1468;1,1378,1384,1420,1420;0,1378,1388,1418,1436;1,1388,1402,1425,1436;1,1336,1354,1403,1403;1,1305,1316,1350,1360;1,1270,1299,1300,1322;1,1283,1290,1307,1340;1,1239,1273,1294,1300;0,1262,1262,1320,1353;0,1303,1320,1330,1355;0,1320,1328,1353,1353;0,1340,1353,1403,1424;1,1375,1379,1410,1424;0,1361,1379,1391,1397;0,1371,1386,1389,1392;1,1330,1336,1384,1384;0,1337,1343,1344,1357;1,1308,1331,1352,1365;0,1292,1328,1340,1344;0,1323,1333,1343,1369;0,1345,1350,1367,1367;0,1370,1373,1387,1400;1,1351,1360,1390,1390;0,1350,1356,1392,1392;1,1360,1366,1390,1415;1,1360,1367,1371,1371;1,1313,1349,1363,1366;1,1290,1313,1347,1347;0,1304,1311,1320,1329;1,1233,1248,1314,1314;1,1199,1231,1232,1248;0,1218,1239,1253,1262;1,1136,1164,1246,1246;0,1141,1167,1168,1199;1,1087,1101,1172,1172;1,1067,1096,1105,1122;0,1098,1105,1158,1168;1,1098,1131,1152,1152;1,1027,1050,1106,1122;0,1014,1052,1133,1162;1,1032,1093,1137,1137;0,1092,1100,1113,1138;1,1052,1075,1112,1112;1,1062,1081,1082,1097;1,1019,1037,1079,1089;1,999,1025,1036,1036;1,951,982,1024,1031;1,912,961,962,990;0,711,865,942,956;1,792,797,932,932;0,799,837,850,885;0,824,830,860,865;1,673,673,838,838;1,582,622,684,684;0,612,625,738,748;0,693,744,789,845;1,688,709,788,822;1,602,648,674,700;1,604,653,668,688;1,577,610,651,657;0,630,630,655,726;0,645,669,755,789;1,688,704,725,753;0,703,718,758,794;0,711,756,771,783;1,737,746,758,812;1,642,661,748,748;0,603,643,644,688;0,655,670,690,730;1,625,663,669,684;1,364,388,638,650';
const kl = $('kline'), S = 2.529, px = i => 50 + i * 12.477;
for (let i = 0; i < 9; i++) line(kl, 43, 158.5 + i * 59.2, 963, 158.5 + i * 59.2, '#606060', '1 4');
K.split(';').forEach((row, i) => {
  const [up, h, t, b, l] = row.split(',').map(Number), c = up ? '#ff5c5c' : '#0ff', x = Math.round(px(i));
  line(kl, x, h / S, x, t / S, c);
  line(kl, x, b / S, x, l / S, c);
  if (b - t < 2) line(kl, x - 4, t / S, x + 5, t / S, c);
  else rect(kl, x - 4, t / S, 8, (b - t) / S, up ? '#070707' : c, c);
});
const ma = (s, c) => poly(kl, s.split(' ').map(p => { const [i, y] = p.split(','); return px(+i) + ',' + y / S; }).join(' '), c);
ma('0,1644 7,1616 13.8,1596 23,1567 29.6,1550 34.6,1527 38.4,1507 46,1475 51,1443 56,1402 61,1362 65,1328 68,1304 71,1276', '#00e0ff');
ma('0,1731 9.5,1714 20.4,1694 32.3,1669 42,1638 50.2,1606 58.7,1566 65,1540 71,1510', '#ffffa0');
ma('0,1584 3.8,1566 9,1532 15,1502 20,1474 25,1452 29.8,1427 36,1385 40,1352 43,1331 47,1299 52,1250 55,1215 59,1166 63,1118 67,1082 69,1061 71,1032', '#c0c0c0');
ma('0,1504 2,1490 4,1472 6,1455 8,1434 10,1417 12,1403 14,1394 16,1383 18,1375 20,1370 22,1368 24,1364 26,1361 28,1360 30,1346 32,1337 34,1325 36,1310 38,1298 40,1284 42,1270 44,1250 46,1225 48,1200 50,1170 52,1133 54,1085 56,1045 58,1003 60,960 61,938 62,925 64,893 66,870 68,838 70,810 71,790', '#0f0');
ma('0,1459 1,1446 2,1438 4,1424 5,1412 6,1405 8,1382 10,1371 12,1370 14,1371 16,1366 18,1357 20,1350 22,1346 24,1350 26,1353 28,1359 29,1360 30,1354 31,1348 32,1341 33,1331 34,1318 35,1303 36,1292 37,1284 38,1272 39,1257 41,1237 43,1208 45,1175 47,1140 49,1105 51,1062 53,1020 54,990 56,957 58,910 60,862 61,840 63,805 65,775 67,745 68,730 69,717 70,710 71,687', '#f0f');
ma('0,1407 2,1408 4,1409 5,1392 6,1384 7,1370 8,1358 9,1345 10,1339 11,1335 13,1331 14,1335 15,1342 16,1347 17,1352 18,1361 20,1362 23,1358 26,1362 28,1359 29,1354 30,1347 31,1335 32,1320 33,1301 34,1278 35,1250 36,1225 37,1205 38,1186 39,1160 40,1148 41,1138 42,1121 43,1111 44,1104 45,1098 46,1090 47,1074 48,1056 49,1046 50,1014 51,987 52,962 53,920 54,877 55,846 56,824 57,797 58,765 59,735 60,716 61,695 62,686 63,689 64,702 65,707 66,704 67,697 68,696 69,702 70,707 71,681', '#ff0');
ma('0,1407 1,1411 3,1410 4,1395 5,1375 6,1358 7,1330 8,1306 9,1298 10,1303 11,1315 12,1337 13,1360 14,1374 15,1386 16,1382 17,1369 18,1358 19,1348 20,1341 21,1350 22,1357 23,1362 24,1372 25,1375 26,1374 27,1366 28,1358 29,1340 30,1315 31,1290 32,1273 33,1243 34,1212 35,1185 36,1156 37,1140 38,1129 39,1106 40,1113 41,1113 42,1105 43,1094 44,1098 45,1082 46,1068 47,1042 48,1018 49,990 50,942 51,908 52,883 53,825 54,762 55,749 56,740 57,708 58,702 59,709 60,682 61,657 62,664 63,677 64,697 65,730 66,746 67,731 68,717 69,704 70,682 71,613', '#fff');
axis('axK', 77, 707, ['14000.0', '13500.0', '13000.0', '12500.0', '12000.0', '11500.0', '11000.0', '10500.0', '10000.0'].map((t, i) => [t, 153 + i * 59.2]));

[742.3, 791.3, 838].forEach(y => line($('vol'), 43, y, 963, y, '#606060', '1 3'));
line($('vol'), 50, 791.3, 935, 791.3, '#f0f', '', 2);
axis('axV', 707, 841, [['1.00', 736], ['-0.01', 786], ['-1.00', 821]]);

const mc = $('macd');
[876, 925.6, 973.5].forEach(y => line(mc, 43, y, 963, y, '#606060', '1 3'));
[-8, -8, -12, -13, -6, 2, 8, 14, 17, 9, 2, -6, -23, -28, -33, -35, -27, -23, -18, -16, -15, -18, -23, -21, -26, -21, -18, -12, -3, 0, 14, 24, 27, 38, 44, 57, 57, 46, 43, 47, 35, 28, 18, 15, 12, 13, 16, 20, 25, 28, 50, 50, 45, 67, 85, 70, 45, 38, 37, 32, 32, 18, -8, -21, -40, -53, -60, -47, -38, -40, -35, 9]
  .forEach((v, i) => v && line(mc, px(i), 950.5, px(i), 950.5 - v / 2.509, v > 0 ? '#ff4a3c' : '#0ff'));
const T4 = 'translate(0 600) scale(.6762 .39857)';
const mg = group(mc, T4);
poly(mg, '74,816 92,817 110,821 128,824 148,821 165,816 185,811 203,805 221,801 240,804 258,808 278,814 294,827 314,832 332,839 351,844 369,845 388,847 405,845 442,846 461,850 480,855 498,859 516,863 535,864 553,865 572,867 590,862 609,858 628,849 645,842 664,837 683,827 701,818 720,803 737,794 757,793 775,790 793,781 811,786 830,784 850,787 868,786 887,787 905,785 923,781 942,777 960,772 978,765 997,747 1014,740 1034,738 1051,718 1070,698 1088,698 1106,704 1125,704 1144,699 1162,696 1181,693 1199,696 1218,711 1236,721 1253,735 1273,752 1290,762 1310,762 1327,762 1346,765 1364,769 1383,746', '#fff');
poly(mg, '74,811 110,814 148,817 185,815 221,811 258,810 294,813 314,817 332,822 351,826 388,834 442,838 480,846 516,852 553,858 572,860 609,860 645,856 683,849 701,842 737,827 775,813 811,804 850,797 887,794 923,789 960,783 997,772 1034,761 1070,742 1106,726 1144,717 1181,708 1199,706 1236,711 1273,722 1290,731 1327,741 1364,752 1383,748', '#ff0');
axis('axM', 841, 976, [['471.47', 870], ['159.53', 919], ['-152.41', 957]]);

const kj = $('kdj'), jg = group(kj, T4);
[1011, 1061.5, 1110].forEach(y => line(kj, 43, y, 963, y, '#606060', '1 3'));
poly(jg, '74,1158 128,1164 148,1153 165,1135 203,1110 221,1100 240,1101 278,1118 314,1160 351,1190 369,1196 388,1192 424,1167 461,1160 498,1178 535,1195 572,1189 609,1162 645,1128 683,1108 737,1082 775,1088 811,1090 850,1112 887,1125 923,1115 960,1104 997,1110 1034,1114 1070,1099 1125,1110 1162,1110 1199,1102 1236,1122 1273,1152 1290,1166 1310,1169 1346,1160 1364,1153 1383,1137', '#ff0');
poly(jg, '74,1173 92,1165 110,1173 128,1160 148,1130 165,1105 185,1095 203,1085 221,1082 240,1102 258,1120 278,1143 294,1180 314,1195 332,1210 351,1220 369,1200 388,1190 405,1158 424,1148 442,1145 461,1160 480,1190 498,1190 516,1215 535,1203 553,1195 572,1183 590,1150 609,1130 628,1105 645,1095 664,1098 683,1088 701,1082 720,1073 737,1069 757,1087 775,1093 793,1081 811,1108 830,1115 850,1132 868,1136 887,1140 905,1120 923,1103 942,1094 960,1091 978,1118 997,1110 1014,1115 1034,1122 1051,1098 1070,1085 1088,1095 1106,1118 1125,1118 1144,1108 1181,1092 1199,1098 1218,1134 1236,1142 1273,1184 1290,1197 1310,1172 1327,1153 1346,1150 1364,1135 1383,1109', '#fff');
poly(jg, '74,1206 92,1172 110,1188 128,1155 148,1090 165,1043 185,1040 203,1034 221,1045 240,1098 258,1140 278,1185 294,1260 314,1268 332,1283 351,1280 369,1220 388,1187 405,1110 424,1104 442,1110 461,1158 480,1232 498,1217 516,1268 535,1222 553,1200 572,1163 590,1092 609,1070 628,1032 645,1032 664,1059 683,1047 701,1050 720,1034 737,1042 757,1093 775,1106 793,1078 811,1137 830,1141 850,1178 868,1165 887,1165 905,1108 923,1083 942,1067 960,1067 978,1140 997,1110 1014,1120 1034,1134 1051,1068 1070,1051 1088,1093 1106,1148 1125,1143 1144,1108 1162,1098 1181,1073 1199,1092 1218,1178 1236,1180 1253,1218 1273,1256 1290,1256 1310,1180 1327,1130 1346,1130 1364,1103 1383,1050', '#f0f');
axis('axJ', 976, 1113, [['103.84', 1005], ['52.27', 1055], ['1.70', 1093]]);

/* tick list */
$('ticks').innerHTML = '14:31 09.00u,:34 06.00d,:34 07.00u,:35 04.50d,:44 17.00u,:49 19.00u,:49 20.50u,:52 22.00u,:54 18.50d,:57 22.00u,:57 23.00u,14:32 28.00u,:06 32.50u,:11 33.50u,:12 36.50u,:13 38.00u,:13 37.00d,:16 41.50u,:17 42.50u,:17 44.00u,:18 43.00d,:19 38.50d,:22 41.50u,:22 41.00d,:22 38.00d,:27 39.50u,:27 38.00d,:27 39.00u,:28 36.00d,:30 32.50d,:33 34.50u,:34 34.00d,:35 26.00d,:38 29.50u,:39 33.00u,:48 32.00d,:50 39.50u,14:33 41.50u'
  .split(',').map(r => {
    const [t, v] = r.split(' '), up = v.endsWith('u');
    return `<tr class="${t.length > 3 ? 'hr' : ''}"><td>${t}</td><td>140${v.slice(0, -1)}<svg class="${up ? 'r' : 'g'}"><use href="#${up ? 'up' : 'down'}"/></svg></td><td>0</td></tr>`;
  }).join('');
$('stats').innerHTML = [['最新', '14041.50', 'r'], ['均价', '--', 'g'], ['涨跌', '955.00', 'r'], ['今开', '13201.00', 'r'], ['涨幅', '7.30%', 'r'], ['最高', '14119.50', 'r'], ['总量', '--', ''], ['最低', '13164.50', 'r'], ['金额', '--', 'c'], ['量比', '--', 'g'], ['涨停', '--', 'r'], ['跌停', '--', 'g'], ['外盘', '--', 'r'], ['内盘', '--', 'g'], ['持仓', '--', ''], ['结算', '--', ''], ['仓差', '0', ''], ['前结', '13086.50', ''], ['日增', '0', '']]
  .map(s => `<div><dt>${s[0]}</dt><dd class="${s[2]}">${s[1]}</dd></div>`).join('');

/* small intraday chart */
const mi = $('mini');
const ys = [0, 1, 2, 3, 4, 5, 6, 7, 8, 9, 10].map(i => 567.5 + i * 35.4);
ys.concat([940.8, 976.2, 1013.7, 1041, 1068, 1096.6, 1125, 1153, 1181.5]).forEach((y, i) => line(mi, 1464, y, 1651, y, '#2c2c2c', '', i === 5 ? 2 : 1));
for (let i = 0; i < 19; i++) {
  const x = 1464 + i * 10.38, d = i % 18 ? '1 2' : '';
  line(mi, x, 567.5, x, 921.5, '#303030', d);
  line(mi, x, 940.8, x, 1181.5, '#303030', d);
}
const sg = group(mi, 'translate(1050 600) scale(.42735 .39857)');
poly(sg, '967,310 970,325 975,318 980,306 988,312 994,327 1000,318 1003,300 1006,262 1009,255 1012,180 1015,140 1018,95 1021,60 1024,-2 1028,30 1032,0 1035,-10 1040,18 1045,20 1052,-3 1055,-62 1060,-37 1065,-65 1068,-30 1072,-12 1074,-50 1078,-67 1082,-20 1085,2 1090,-47 1095,-30 1098,-67 1102,-37', '#fff', 1);
for (let x = 967; x < 1102; x += 2) {
  const n = Math.abs(Math.sin(x * 1.7)) * 14 + 6;
  const red = (x > 976 && x < 986) || (x > 998 && x < 1025) || (x > 1047 && x < 1060) || (x > 1073 && x < 1080) || (x > 1090);
  rect(sg, x, red ? 1203 - n * (x > 1002 && x < 1024 ? 2 : 1) : 1203, 2, red ? n * (x > 1002 && x < 1024 ? 2 : 1) : n * (x > 1025 ? 1.6 : .5), red ? '#ff5a5a' : '#0ff');
}
poly(sg, '967,1208 975,1210 982,1190 988,1200 995,1215 1003,1190 1010,1130 1016,1078 1022,1060 1025,1040 1028,1075 1033,1120 1038,1150 1042,1200 1048,1205 1055,1165 1058,1138 1063,1160 1070,1200 1075,1235 1080,1215 1085,1235 1092,1175 1096,1190 1101,1195', '#fff', 1);
poly(sg, '967,1210 975,1212 984,1190 990,1202 997,1215 1005,1188 1012,1130 1018,1078 1023,1062 1026,1060 1030,1080 1034,1122 1040,1155 1044,1200 1050,1202 1057,1163 1065,1162 1072,1205 1077,1230 1087,1225 1098,1175', '#ff0');
poly(sg, '967,1360 975,1300 982,1320 990,1395 996,1380 1006,1270 1012,1300 1022,1270 1034,1330 1042,1390 1050,1300 1060,1380 1070,1410 1080,1330 1090,1300 1101,1350', '#ff0', 2);
poly(sg, '967,1400 970,1330 974,1440 978,1262 980,1340 984,1300 987,1400 990,1340 993,1430 997,1310 1001,1250 1003,1330 1006,1270 1009,1310 1012,1270 1015,1300 1017,1360 1020,1268 1023,1330 1026,1280 1028,1400 1032,1262 1036,1370 1039,1330 1041,1425 1045,1350 1048,1252 1051,1400 1054,1258 1057,1330 1060,1310 1062,1455 1066,1260 1069,1445 1072,1340 1075,1265 1078,1400 1082,1330 1084,1440 1089,1248 1092,1420 1096,1262 1098,1330 1100,1440', '#f0f', 2);
const pv = [14120, 13913, 13706, 13500, 13293, 13087, 12880, 12673, 12467, 12260, 12054];
const pc = ['7.9%', '6.3%', '4.7%', '3.2%', '1.6%', '0.0%', '1.6%', '3.2%', '4.7%', '6.3%', '7.9%'];
const tone = i => i < 5 ? 'r' : i > 5 ? 'g' : 'w';
axis('axL', 533, 1186, pv.map((v, i) => [v, ys[i] - 10, tone(i)]).concat([['0', 932], ['0', 968], ['96.63', 1004, 'r'], ['56.72', 1032, 'r'], ['16.81', 1059, 'r'], ['117.46', 1087, 'r'], ['71.83', 1115, 'r'], ['26.21', 1143, 'r']]));
axis('axR', 533, 1186, pc.map((v, i) => [v, ys[i] - 10, tone(i)]).concat([['0', 930], ['0', 966]]));

/* large intraday chart */
const it = $('intra'), R = '#7c0000';
const hy = [...Array(21)].map((_, i) => 132.5 + i * 37.25);
hy.forEach((y, i) => line(it, 1853, y, 2918, y, R, '', i === 10 ? 3 : i === 20 ? 2 : 1));
[917.5, 956.5, 995.5, 1035.5, 1058.5, 1098.5, 1137.5, 1177.5].forEach(y => line(it, 1853, y, 2918, y, R));
[1853.5, 1973, 2091, 2208, 2327, 2445.5, 2564.5, 2681, 2799].forEach(x => {
  line(it, x, 132, x, 1035, R); line(it, x, 1058, x, 1178, R);
});
[1914, 2031.5, 2149.5, 2268.5, 2387, 2504, 2622.5, 2741.5, 2858.5].forEach(x => {
  line(it, x, 132, x, 1035, R, '2 4'); line(it, x, 1058, x, 1178, R, '2 4');
});
const pg = group(it, 'translate(1710 0) scale(.35714 .49746)');
poly(pg, '403,996 658,996 670,990 700,982 710,970 740,955 765,935 800,915 820,905 860,899 930,886 995,877 1030,868 1080,860 1145,852 1160,842 1190,828 1230,821 1270,813 1320,802', '#d8d864', 1);
poly(pg, '403,1012 404,985 408,980 410,955 415,962 418,948 422,972 426,950 430,974 434,955 440,970 446,958 452,968 458,960 465,973 472,955 478,963 484,950 490,948 494,932 500,942 508,935 516,938 524,932 532,945 538,937 545,948 552,940 558,955 564,950 572,955 578,965 584,972 590,970 597,962 604,955 612,962 620,960 628,962 636,958 644,948 652,942 658,935 662,905 668,880 672,872 676,850 680,860 686,845 692,848 698,832 703,800 706,760 709,725 713,713 716,748 720,740 723,700 728,680 732,695 736,650 740,630 742,613 746,640 748,668 752,650 756,620 760,600 764,565 768,540 772,545 776,510 779,528 782,482 786,520 790,510 793,485 795,400 800,382 803,430 808,452 814,442 820,448 826,440 832,420 838,443 844,425 850,425 856,375 860,370 866,388 872,365 876,375 882,365 888,375 894,385 900,395 908,408 916,405 924,415 932,420 940,430 948,425 956,425 960,395 966,400 974,398 980,408 986,400 990,375 996,340 1000,325 1006,335 1010,325 1013,290 1018,270 1023,300 1028,280 1033,290 1038,270 1044,290 1048,310 1052,328 1058,300 1064,290 1070,298 1076,275 1082,300 1090,310 1096,320 1104,325 1110,350 1115,345 1120,360 1126,345 1129,383 1134,365 1140,345 1146,340 1150,300 1155,266 1158,310 1163,280 1168,300 1174,340 1180,330 1186,350 1192,365 1198,350 1205,345 1209,385 1214,408 1220,380 1226,350 1232,350 1238,320 1246,305 1252,318 1258,310 1264,335 1270,335 1276,320 1283,328 1288,290 1292,270 1300,266 1305,285 1310,320 1315,335 1320,320 1326,308', '#fff', 1);
line(it, 1855, 877, 1855, 1035, '#fff', '', 2);
line(it, 1855, 1034, 2184, 1034, '#d8d864', '', 2);
line(it, 1855, 1034, 2184, 1034, '#00d8e0', '3 3', 2);
[[1945, 1], [1948, 3], [1951, 2], [1961, 4], [1963, 5], [1966, 3], [1972, 4], [1975, 2], [1981, 2], [1992, 3], [2122, 2], [2129, 3], [2141, 2]].forEach(b => line(it, b[0], 1033, b[0], 1033 - b[1], '#d8d864', '', 2));
line(it, 2109, 1118, 2182, 1118, '#e060e8', '', 2);
const lp = ['14086.5', '13993.0', '13895.5', '13798.1', '13700.7', '13607.1', '13509.7', '13412.3', '13314.9', '13217.4', '13120.0', '13026.5', '12929.0', '12831.6', '12734.2', '12636.8', '12543.2', '12445.8', '12348.4', '12250.9', '12153.5'];
const rp = ['7.37', '6.65', '5.91', '5.17', '4.43', '3.71', '2.97', '2.23', '1.49', '0.74', '0.00', '0.71', '1.46', '2.20', '2.94', '3.68', '4.40', '5.14', '5.88', '6.62', '7.37'];
const tint = i => (i < 10 ? 'r' : i > 10 ? 'g' : 'w') + (i === 17 ? ' hl' : '');
axis('axCL', 122, 1178, lp.map((v, i) => [v, 123 + i * 37.25, tint(i)]).concat([['22096', 908, 'cy'], ['14824', 947, 'cy'], ['7552', 986, 'cy'], ['2686.0', 1050, 'gy'], ['2685.3', 1089, 'gy'], ['2684.7', 1128, 'gy']]));
axis('axCR', 122, 1178, rp.map((v, i) => [v + '%', 123 + i * 37.25, tint(i)]));

/* label below each toolbar button */
document.querySelectorAll('.ic').forEach(b => {
  const t = b.lastChild, s = document.createElement('span');
  s.className = 'lab'; s.textContent = t.textContent; t.replaceWith(s);
});
const cg = rows => '<dl class="cgrp">' + rows.map(s => `<div><dt>${s[0]}</dt><dd class="${s[2]}">${s[1]}</dd></div>`).join('') + '</dl>';
$('cstats').innerHTML =
  cg([['卖出', '14031.0', 'r'], ['', '2', 'c'], ['买入', '14025.5', 'r'], ['', '2', 'c']]) +
  cg([['成交', '14033.0', 'r'], ['开盘', '13201.0', 'r'], ['涨跌', '+913.0', 'r'], ['昨收', '13120.0', 'w'], ['涨幅', '+6.96%', 'r'], ['最高', '14125.0', 'r'], ['振幅', '7.34%', 'c'], ['最低', '13162.5', 'r'], ['现手', '1', 'w'], ['均价', '13391.6', 'r'], ['成交量', '54,677', '']]) +
  cg([['持仓', '2685', 'c'], ['昨结', '–', ''], ['日增仓', '+2685', 'c'], ['开平', '空换', 'c t'], ['涨停', '–', ''], ['跌停', '–', '']]);
$('cticks').innerHTML = '2:28 27.0 1 dg,2:30 24.0 3 uw,2:30 24.0 1 uw,2:33 24.5 1 ur,2:33 24.5 1 uw,2:34 18.0 1 uw,2:34 16.5 1 uw,2:34 16.5 1 uw,2:34 16.5 1 uw,2:34 15.5 1 uw,2:34 15.5 1 uw,2:34 15.0 1 uw,2:34 14.5 1 uw,2:34 13.5 1 uw,2:34 12.5 1 dg,2:34 11.5 1 dg,2:34 11.0 1 dg,2:34 11.0 1 dg,2:34 11.0 2 dg,2:34 10.0 1 dg,2:34 10.0 2 dg,2:34 09.5 1 dg,2:34 09.5 1 dg,2:34 18.0 1 uw,2:38 22.0 1 ur,2:38 22.5 1 uw,2:48 24.5 1 dg,2:50 30.0 0 dg,3:01 33.0 1 uw'
  .split(',').map(r => {
    const [t, p, n, c] = r.split(' ');
    return `<tr><td>14:3${t}</td><td>140${p}</td><td class="${c}">${n}<svg><use href="#fat-${c[0] === 'u' ? 'up' : 'down'}"/></svg></td></tr>`;
  }).join('');
```
